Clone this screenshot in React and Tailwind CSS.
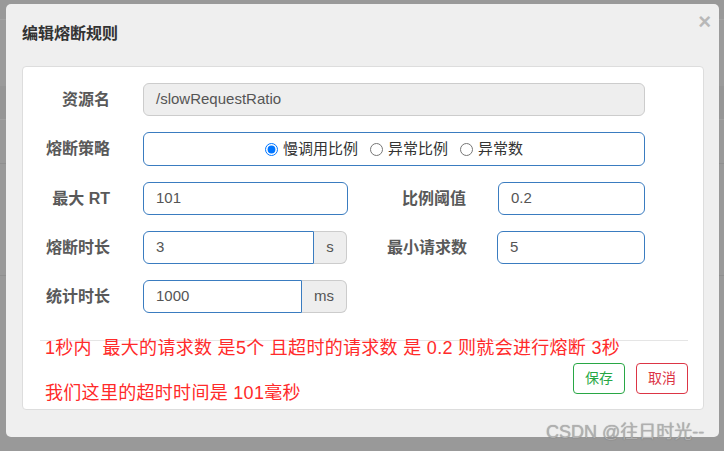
import React from 'react';

// 熔断规则编辑弹窗
const Field = ({ value, className = '' }) => (
  <div className={`h-[33px] flex items-center pl-[12px] border border-[#3a7cc0] rounded-[6px] bg-white text-[15px] text-[#555] ${className}`}>
    {value}
  </div>
);

const Addon = ({ value, unit, unitW }) => (
  <div className="flex w-[204px] h-[33px]">
    <div className="flex-1 flex items-center pl-[12px] border border-[#3a7cc0] rounded-l-[6px] bg-white text-[15px] text-[#555]">
      {value}
    </div>
    <div className={`${unitW} flex items-center justify-center border border-l-0 border-[#ccc] rounded-r-[6px] bg-[#eee] text-[15px] text-[#555]`}>
      {unit}
    </div>
  </div>
);

const Label = ({ children, className = 'w-[87px]' }) => (
  <div className={`${className} text-right text-[16px] font-bold text-[#595959] shrink-0`}>{children}</div>
);

const Radio = ({ label, checked }) => (
  <label className="flex items-center gap-[5px] text-[15px] text-[#333]">
    <input type="radio" name="grade" defaultChecked={checked} className="m-0 w-[13px] h-[13px]" />
    {label}
  </label>
);

export default function App() {
  return (
    <div className="relative w-[724px] h-[451px] overflow-hidden bg-[#999] font-['Liberation_Sans','Noto_Sans_CJK_SC',sans-serif]">
      {/* 遮罩下面的页面 */}
      <div className="flex flex-col">
        <div className="h-[20px] border-b border-[#a2a2a2]" />
        <div className="h-[66px] bg-[#9b9b9b]" />
        <div className="h-[34px] bg-[#969696] border-b border-[#a0a0a0]" />
        <div className="h-[44px] border-b border-[#8f8f8f]" />
        <div className="h-[112px] border-b border-[#8f8f8f]" />
      </div>

      <div className="absolute left-[6px] top-[4px] w-[713px] h-[433px] rounded-[5px] bg-[#efefef] flex flex-col">
        <div className="relative h-[62px] pl-[16px] flex items-center">
          <h4 className="-mt-[2px] text-[16px] font-bold text-[#333]">编辑熔断规则</h4>
          <span className="absolute right-[8px] top-[3px] text-[22px] font-bold text-[#b8b8b8] leading-[30px]">×</span>
        </div>

        <div className="mx-[16px] mr-[15px] h-[344px] border border-[#ddd] rounded-[4px] bg-white pt-[16px] flex flex-col">
          <div className="flex flex-col gap-[16px]">
            <div className="flex items-center">
              <Label>资源名</Label>
              <div className="ml-[33px] w-[502px] h-[33px] flex items-center pl-[12px] border border-[#ccc] rounded-[6px] bg-[#eee] text-[15px] text-[#555]">
                /slowRequestRatio
              </div>
            </div>

            <div className="flex items-center">
              <Label>熔断策略</Label>
              <div className="ml-[33px] w-[502px] h-[34px] flex items-center justify-center gap-[12px] border border-[#3a7cc0] rounded-[6px] bg-white">
                <Radio label="慢调用比例" checked />
                <Radio label="异常比例" />
                <Radio label="异常数" />
              </div>
            </div>

            <div className="flex items-center">
              <Label>最大 RT</Label>
              <Field value="101" className="ml-[33px] w-[205px]" />
              <Label className="w-[118px]">比例阈值</Label>
              <Field value="0.2" className="ml-[32px] w-[147px]" />
            </div>

            <div className="flex items-center">
              <Label>熔断时长</Label>
              <div className="ml-[33px]">
                <Addon value="3" unit="s" unitW="w-[33px]" />
              </div>
              <Label className="w-[120px]">最小请求数</Label>
              <Field value="5" className="ml-[30px] w-[148px]" />
            </div>

            <div className="flex items-center">
              <Label>统计时长</Label>
              <div className="ml-[33px]">
                <Addon value="1000" unit="ms" unitW="w-[45px]" />
              </div>
            </div>
          </div>

          <div className="mt-[27px] ml-[17px] mr-[15px] border-t border-[#e5e5e5]">
            <p className="-mt-[3px] pl-[5px] text-[18px] leading-[20px] text-[#ff2a2a] whitespace-pre tracking-[0.3px]">
              1秒内  最大的请求数 是5个 且超时的请求数 是 0.2 则就会进行熔断 3秒
            </p>
            <div className="mt-[5px] flex justify-between items-start">
              <p className="mt-[20px] pl-[5px] text-[18px] leading-[20px] text-[#ff2a2a] tracking-[0.3px]">我们这里的超时时间是 101毫秒</p>
              <div className="flex gap-[11px]">
                <button className="w-[52px] h-[31px] border border-[#28a745] rounded-[4px] text-[14px] text-[#28a745] bg-white">保存</button>
                <button className="w-[52px] h-[31px] border border-[#dc3545] rounded-[4px] text-[14px] text-[#dc3545] bg-white">取消</button>
              </div>
            </div>
          </div>
        </div>
      </div>

      <span className="absolute left-[546px] top-[421px] text-[18px] leading-[22px] text-[#b0b0b0] [text-shadow:0_0_1px_rgba(0,0,0,0.35)]">
        CSDN @往日时光--
      </span>
    </div>
  );
}
